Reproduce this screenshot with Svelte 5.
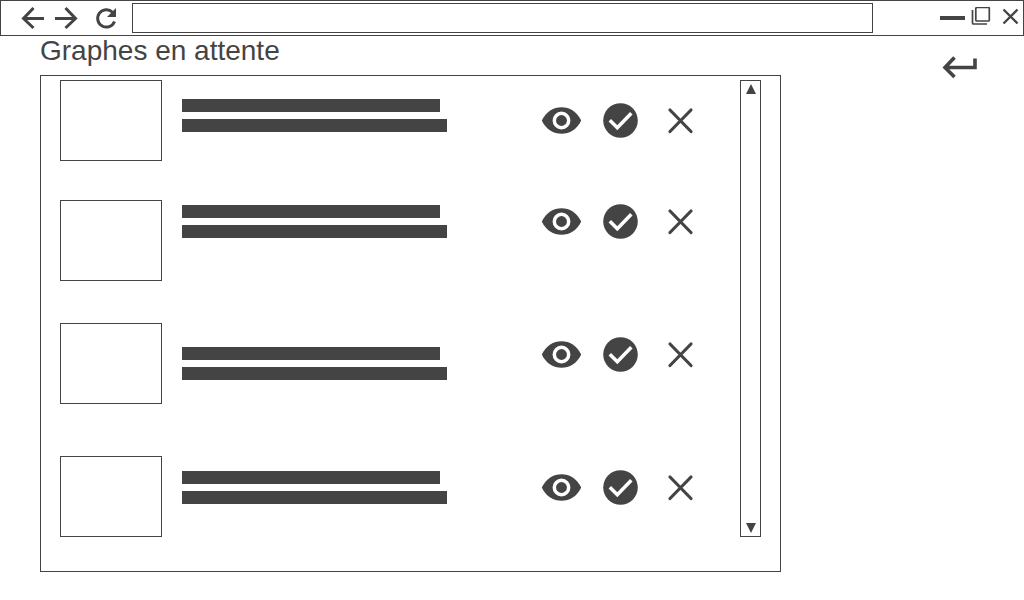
<script>
  const rows = ['first', 'second', 'third', 'fourth'];
</script>

<div class="window">
  <header>
    <nav aria-label="Navigation">
      <button class="nav" aria-label="Précédent">
        <svg viewBox="0 0 24 24"><path d="M12.500 2 2.500 12.500l10 9.500M2.500 12.500H23" /></svg>
      </button>
      <button class="nav" aria-label="Suivant">
        <svg viewBox="0 0 24 24"><path d="M11.500 2l10 10.500-10 9.500M21.500 12.500H1" /></svg>
      </button>
      <button class="nav reload" aria-label="Actualiser">
        <svg viewBox="0 0 24 24">
          <path d="M20.500 15.500A8.700 8.700 0 1 1 18.500 6.200" />
          <path class="solid" d="M22 2v9h-9z" />
        </svg>
      </button>
    </nav>
    <input class="address" type="text" aria-label="Adresse" />
    <div class="controls">
      <button class="minimise" aria-label="Réduire">
        <svg viewBox="0 0 26 22"><path class="solid" d="M0 9h25v4H0z" /></svg>
      </button>
      <button aria-label="Restaurer">
        <svg viewBox="0 0 22 22" class="fine">
          <rect x="4.800" y="0.500" width="13.500" height="13.500" rx="1" />
          <path d="M1.500 3v13q0 1 1 1H16" />
        </svg>
      </button>
      <button aria-label="Fermer">
        <svg viewBox="0 0 22 22" class="thin"><path d="M5.500 2.500l14 14M19.500 2.500l-14 14" /></svg>
      </button>
    </div>
  </header>

  <div class="page">
    <main>
      <h1>Graphes en attente</h1>
      <section class="panel" aria-label="Graphes en attente">
        <ul>
          {#each rows as row}
            <li class={row}>
              <div class="thumb"></div>
              <div class="lines"><span></span><span></span></div>
              <div class="actions">
                <button aria-label="Voir">
                  <svg viewBox="0 0 41 41">
                    <path class="solid" d="M.800 20.500C5 11.500 12.500 7.200 20.500 7.200S36 11.500 40.200 20.500C36 29.500 28.500 33.800 20.500 33.800S5 29.500.800 20.500z" />
                    <circle class="ring" cx="20.500" cy="20.500" r="7.200" />
                  </svg>
                </button>
                <button aria-label="Valider">
                  <svg viewBox="0 0 41 41">
                    <circle class="solid" cx="20.500" cy="20.500" r="17.300" />
                    <path class="tick" d="M9.800 20.300l7.500 7.500L31.300 13.300" />
                  </svg>
                </button>
                <button aria-label="Refuser">
                  <svg viewBox="0 0 41 41"><path class="cross" d="M11 10l21 21.500M32 10 11 31.500" /></svg>
                </button>
              </div>
            </li>
          {/each}
        </ul>
        <div class="scroll">
          <button aria-label="Défiler vers le haut">
            <svg viewBox="0 0 19 18"><path class="solid" d="M10 3l5 10H5z" /></svg>
          </button>
          <button aria-label="Défiler vers le bas">
            <svg viewBox="0 0 19 18"><path class="solid" d="M10 15L5 5h10z" /></svg>
          </button>
        </div>
      </section>
    </main>
    <button class="back" aria-label="Retour">
      <svg viewBox="0 0 36 24"><path d="M12.500 2.500 3 12.500 12.500 22M3 12.500H33V3.500" /></svg>
    </button>
  </div>
</div>

<style>
  :global(body) {
    margin: 0;
    background: #fff;
    color: #444;
    font-family: "Liberation Sans", Arial, sans-serif;
  }
  * {
    box-sizing: border-box;
  }
  button {
    display: block;
    padding: 0;
    border: 0;
    background: none;
    color: inherit;
    cursor: pointer;
  }
  svg {
    display: block;
    width: 100%;
    height: 100%;
    fill: none;
    stroke: currentColor;
    stroke-width: 3;
  }
  .solid {
    fill: currentColor;
    stroke: none;
  }
  header {
    display: flex;
    align-items: center;
    padding: 2px 3px 2px 20px;
    border: 1px solid #444;
  }
  nav {
    display: flex;
    gap: 9px;
  }
  .nav {
    width: 24px;
    height: 24px;
  }
  .reload {
    margin-left: 7px;
  }
  .address {
    flex: 1;
    min-width: 0;
    height: 30px;
    margin: 0 67px 0 14px;
    padding: 0 8px;
    border: 1px solid #444;
    border-radius: 0;
    background: #fff;
    color: inherit;
    font: 16px "Liberation Sans", Arial, sans-serif;
  }
  .controls {
    display: flex;
    gap: 5px;
  }
  .controls button {
    width: 22px;
    height: 22px;
  }
  .controls .minimise {
    width: 26px;
  }
  .fine {
    stroke-width: 1.700;
  }
  .thin {
    stroke-width: 2.300;
  }
  .page {
    display: flex;
    align-items: flex-start;
    padding: 0 46px 28px 40px;
  }
  main {
    flex: 1;
  }
  h1 {
    margin: 0;
    height: 39px;
    font-size: 28px;
    line-height: 30px;
    font-weight: 400;
  }
  .back {
    width: 36px;
    height: 24px;
    margin: 19px 0 0 161px;
  }
  .back svg {
    stroke-width: 3.600;
  }
  .panel {
    display: flex;
    padding: 4px 19px 34px;
    border: 1px solid #444;
  }
  ul {
    flex: 1;
    margin: 0;
    padding: 0 40px 0 0;
    list-style: none;
  }
  li {
    display: flex;
    align-items: flex-start;
  }
  .thumb {
    width: 102px;
    height: 81px;
    border: 1px solid #444;
  }
  .lines {
    display: grid;
    gap: 7px;
    width: 265px;
    margin-left: 20px;
  }
  .lines span {
    height: 13px;
    background: #444;
  }
  .lines span:first-child {
    margin-right: 7px;
  }
  .actions {
    display: flex;
    gap: 18px;
    margin-left: auto;
  }
  .actions button {
    width: 41px;
    height: 41px;
  }
  .ring {
    fill: currentColor;
    stroke: #fff;
    stroke-width: 3.500;
  }
  .tick {
    stroke: #fff;
    stroke-width: 3.500;
  }
  .cross {
    stroke-width: 3.200;
    stroke-linecap: round;
  }
  .first {
    min-height: 120px;
  }
  .first .lines {
    margin-top: 19px;
  }
  .first .actions {
    margin-top: 20px;
  }
  .second {
    min-height: 123px;
  }
  .second .lines {
    margin-top: 5px;
  }
  .second .actions {
    margin-top: 1px;
  }
  .third {
    min-height: 133px;
  }
  .third .lines {
    margin-top: 24px;
  }
  .fourth .lines {
    margin-top: 15px;
  }
  .third .actions,
  .fourth .actions {
    margin-top: 11px;
  }
  .scroll {
    display: flex;
    flex-direction: column;
    justify-content: space-between;
    width: 21px;
    border: 1px solid #444;
  }
  .scroll button {
    width: 19px;
    height: 18px;
  }
</style>
